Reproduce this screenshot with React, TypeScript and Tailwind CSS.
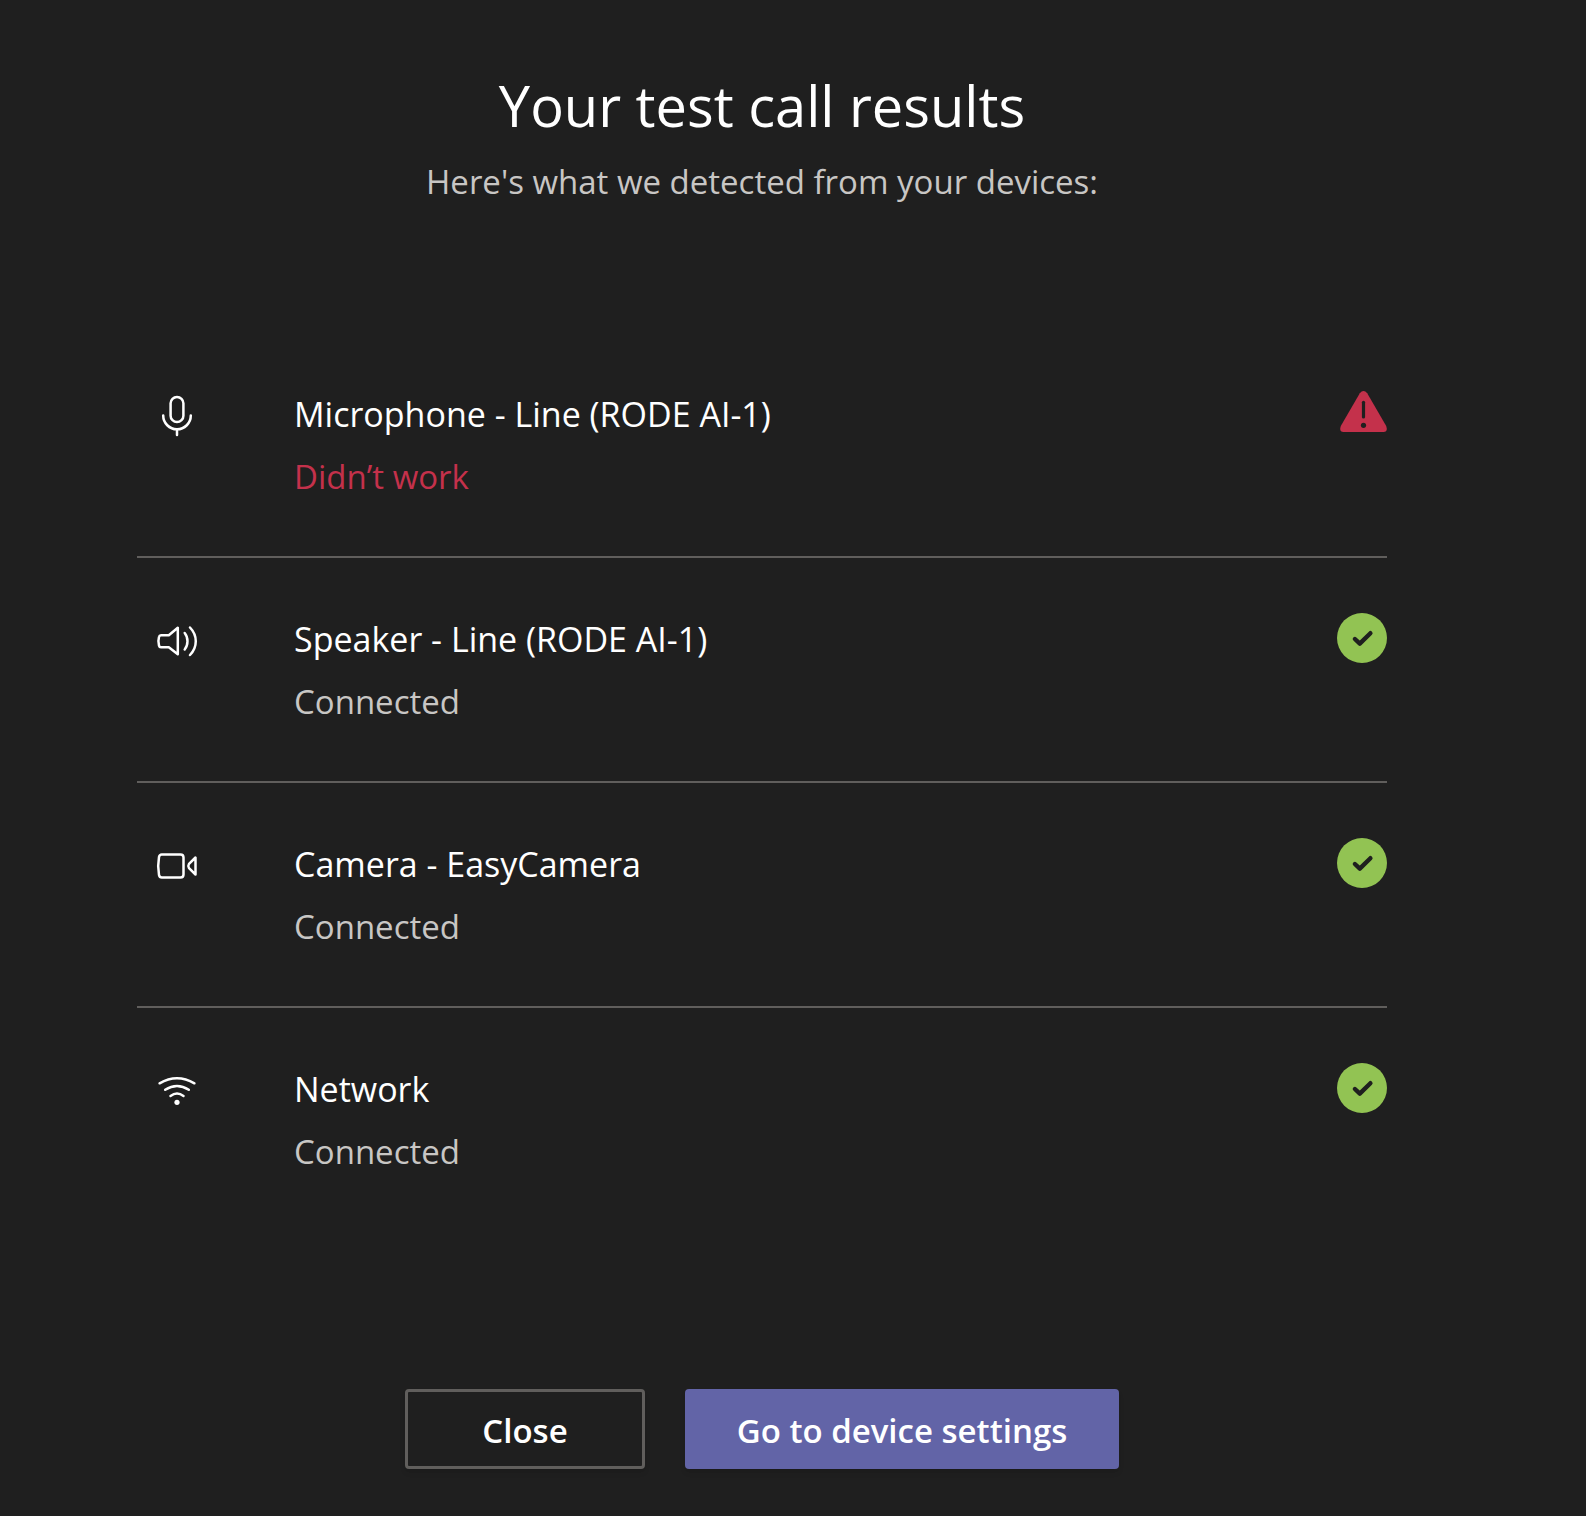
import type { ReactNode } from 'react';

type DeviceStatus = 'ok' | 'failed';

interface DeviceResult {
  id: string;
  label: string;
  message: string;
  status: DeviceStatus;
  icon: ReactNode;
}

function DeviceIcon({ children }: { children: ReactNode }) {
  return (
    <svg
      viewBox="0 -2 48 48"
      className="ml-4 h-12 w-12"
      fill="none"
      stroke="#ffffff"
      strokeWidth="2.5"
      strokeLinecap="round"
      strokeLinejoin="round"
      aria-hidden="true"
    >
      {children}
    </svg>
  );
}

function MicIcon() {
  return (
    <DeviceIcon>
      <rect x="17.6" y="5.9" width="12.8" height="25.2" rx="6.4" />
      <path d="M10.2 24.5a13.8 13.8 0 0 0 27.6 0M24 38.3v5.6" />
    </DeviceIcon>
  );
}

function SpeakerIcon() {
  return (
    <DeviceIcon>
      <path d="M15.8 19.2L24.8 11.8V38.2L15.8 31.2H8Q6.4 31.2 6 29.6Q4.8 25 6 20.8Q6.4 19.2 8 19.2Z" />
      <path d="M31.7 17C35.4 21.5 35.4 29 31.7 33.5M37 11.5C44.7 19.5 44.7 31 37 39" />
    </DeviceIcon>
  );
}

function CameraIcon() {
  return (
    <DeviceIcon>
      <path d="M8.8 13.5H27.5Q30.5 13.5 30.5 16.5V33.5Q30.5 36.5 27.5 36.5H8.8Q6.5 36.5 6 34Q4.4 25 6 16Q6.5 13.5 8.8 13.5Z" />
      <path d="M42.5 16.5V33.5L36 27.2Q34.6 25 36 22.8Z" />
    </DeviceIcon>
  );
}

function NetworkIcon() {
  return (
    <DeviceIcon>
      <path d="M6.6 17.3Q24 7.1 41.4 17.3M12.2 23.8Q24 16 35.8 23.8M17.5 29.9Q24 25.1 30.5 29.9" />
      <circle cx="24" cy="36.3" r="2.6" fill="#ffffff" stroke="none" />
    </DeviceIcon>
  );
}

function StatusIcon({ status }: { status: DeviceStatus }) {
  if (status === 'failed') {
    return (
      <svg viewBox="0 0 50 50" className="h-[50px] w-[50px]" role="img" aria-label="Failed">
        <path
          d="M22.8 5.2Q26.5 1 30.2 5.2L49.2 38Q51.2 44 46.5 44H6.5Q1.8 44 3.8 38Z"
          fill="#c4314b"
        />
        <path d="M26.5 14.3V29" stroke="#1f1f1f" strokeWidth="3.2" strokeLinecap="round" />
        <circle cx="26.5" cy="37.3" r="2.6" fill="#1f1f1f" />
      </svg>
    );
  }

  return (
    <svg viewBox="0 0 50 50" className="h-[50px] w-[50px]" role="img" aria-label="Passed">
      <circle cx="25" cy="25" r="25" fill="#92c353" />
      <path
        d="M17.9 26L22.8 30.6L33.4 20.2"
        fill="none"
        stroke="#1f1f1f"
        strokeWidth="4.4"
        strokeLinecap="round"
        strokeLinejoin="round"
      />
    </svg>
  );
}

const results: DeviceResult[] = [
  {
    id: 'microphone',
    label: 'Microphone - Line (RODE AI-1)',
    message: 'Didn’t work',
    status: 'failed',
    icon: <MicIcon />,
  },
  {
    id: 'speaker',
    label: 'Speaker - Line (RODE AI-1)',
    message: 'Connected',
    status: 'ok',
    icon: <SpeakerIcon />,
  },
  {
    id: 'camera',
    label: 'Camera - EasyCamera',
    message: 'Connected',
    status: 'ok',
    icon: <CameraIcon />,
  },
  {
    id: 'network',
    label: 'Network',
    message: 'Connected',
    status: 'ok',
    icon: <NetworkIcon />,
  },
];

export default function App() {
  return (
    <main className="min-h-screen bg-[#1f1f1f] pt-[65px] pr-[199px] pb-11 pl-[137px] font-['Open_Sans','Noto_Sans',sans-serif] text-[33px] leading-[50px] text-white">
      <header className="text-center">
        <h1 className="text-[56px] leading-[80px]">Your test call results</h1>
        <p className="mt-3 text-[#c8c6c4]">Here's what we detected from your devices:</p>
      </header>

      <ul className="mt-[126px] divide-y-2 divide-[#605e5c]">
        {results.map((result) => (
          <li
            key={result.id}
            className="grid grid-cols-[157px_1fr_50px] items-center pt-[54px] pb-[54px]"
          >
            {result.icon}
            <h2 className="pt-0.5 text-[34px] leading-[50px]">{result.label}</h2>
            <StatusIcon status={result.status} />
            <p
              className={
                result.status === 'failed'
                  ? 'col-start-2 mt-[13px] text-[#c4314b]'
                  : 'col-start-2 mt-[13px] text-[#c8c6c4]'
              }
            >
              {result.message}
            </p>
          </li>
        ))}
      </ul>

      <div className="mt-[158px] flex justify-center gap-10 font-semibold">
        <button
          type="button"
          className="h-20 w-60 rounded border-[3px] border-[#605e5c] pt-1 shadow-md"
        >
          Close
        </button>
        <button type="button" className="h-20 w-[434px] rounded bg-[#6264a7] pt-1 shadow-md">
          Go to device settings
        </button>
      </div>
    </main>
  );
}
